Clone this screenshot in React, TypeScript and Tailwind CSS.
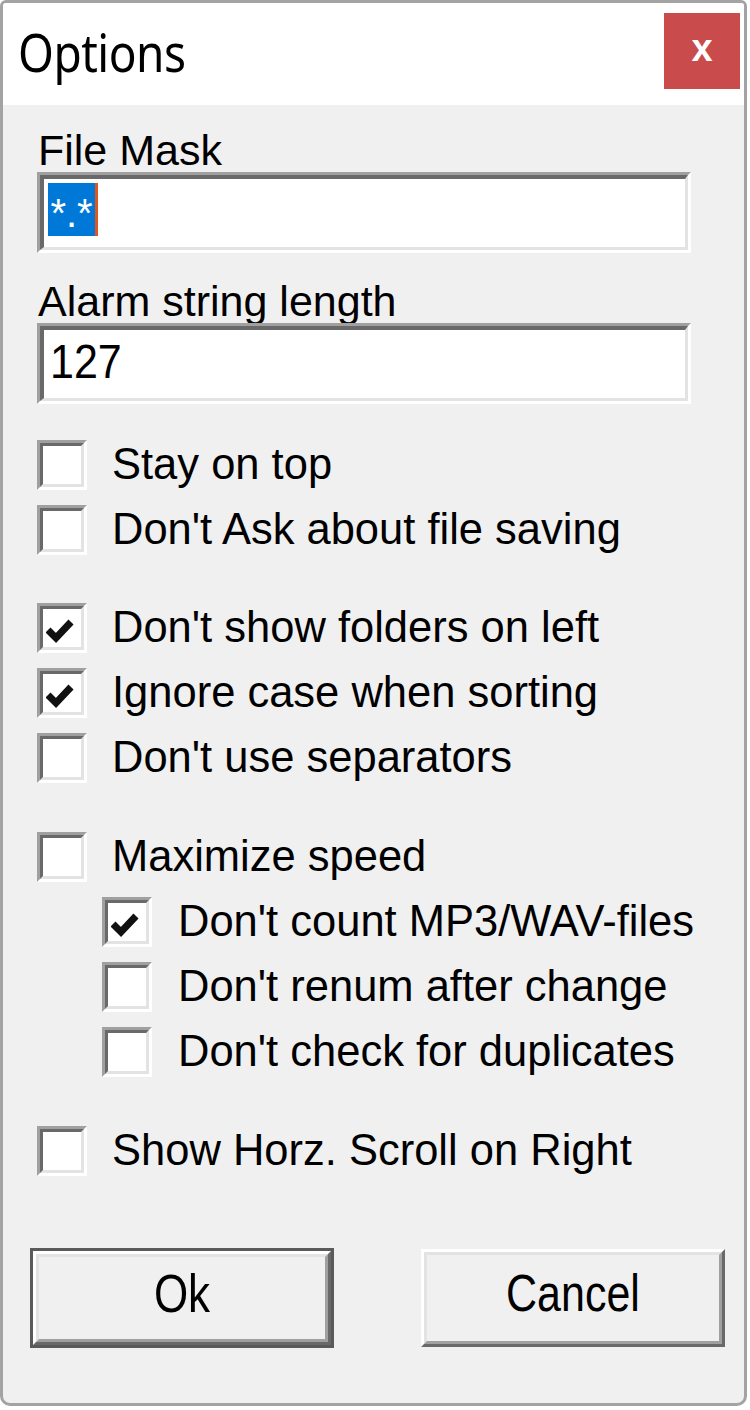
import React from "react";

const sans = "font-['Liberation_Sans',Arial,sans-serif]";

function Check() {
  return (
    <svg className="shrink-0" width="28" height="27" viewBox="0 0 28 27">
      <polyline points="2,12 10,20 25,4" fill="none" stroke="#111" strokeWidth="7" strokeLinejoin="miter" strokeLinecap="butt" />
    </svg>
  );
}

function Box({ checked }: { checked?: boolean }) {
  return (
    <div className="w-[50px] h-[50px] shrink-0 border-[3px] border-t-[#a0a0a0] border-l-[#a0a0a0] border-b-white border-r-white">
      <div className="h-full border-[3px] border-t-[#696969] border-l-[#696969] border-b-[#e3e3e3] border-r-[#e3e3e3] bg-white flex items-start pl-[3px] pt-[9px]">
        {checked && <Check />}
      </div>
    </div>
  );
}

function Row({ label, checked, indent }: { label: string; checked?: boolean; indent?: boolean }) {
  return (
    <div className={`h-[65px] flex items-center ${indent ? "pl-[99px] gap-[26px]" : "pl-[34px] gap-[25px]"}`}>
      <Box checked={checked} />
      <span className={`${sans} text-[43.5px] leading-none text-black whitespace-nowrap`}>{label}</span>
    </div>
  );
}

function Field({ children }: { children: React.ReactNode }) {
  return (
    <div className="w-[654px] h-[81px] border-[3px] border-t-[#a0a0a0] border-l-[#a0a0a0] border-b-white border-r-white">
      <div className="h-full border-t-[4px] border-l-[4px] border-b-[3px] border-r-[3px] border-t-[#696969] border-l-[#696969] border-b-[#e3e3e3] border-r-[#e3e3e3] bg-white flex items-center">
        {children}
      </div>
    </div>
  );
}

const groups: { label: string; checked?: boolean; indent?: boolean }[][] = [
  [{ label: "Stay on top" }, { label: "Don't Ask about file saving" }],
  [
    { label: "Don't show folders on left", checked: true },
    { label: "Ignore case when sorting", checked: true },
    { label: "Don't use separators" },
  ],
  [
    { label: "Maximize speed" },
    { label: "Don't count MP3/WAV-files", checked: true, indent: true },
    { label: "Don't renum after change", indent: true },
    { label: "Don't check for duplicates", indent: true },
  ],
  [{ label: "Show Horz. Scroll on Right" }],
];

export default function App() {
  return (
    <div className="w-[750px] h-[1410px] bg-white">
      <div className="w-[747px] h-[1406px] border-[3px] border-[#a3a3a3] rounded-t-[6px] rounded-b-[10px] overflow-hidden flex flex-col bg-[#f0f0f0]">
        {/* title bar */}
        <div className="h-[102px] shrink-0 bg-white flex justify-between">
          <span className="ml-[15px] mt-[25px] h-[46px] font-['Noto_Sans',sans-serif] text-[46px] leading-none text-black tracking-[-0.5px] scale-y-[1.15]">
            Options
          </span>
          <div className="mt-[10px] mr-[4px] w-[76px] h-[76px] bg-[#c94b4b] flex items-center justify-center">
            <span className={`${sans} text-white font-bold text-[38px] leading-none pb-[6px]`}>x</span>
          </div>
        </div>

        {/* body */}
        <div className="flex-1 flex flex-col pt-[24px]">
          <div className="pl-[34px] flex flex-col">
            <div className={`${sans} pl-[1px] h-[43px] text-[43px] leading-[43px] text-black`}>File Mask</div>
            <Field>
              <div className="self-start mt-[4px] ml-[4px] w-[50px] h-[53px] bg-[#0078d7] border-r-[3px] border-r-[#e0561c] flex items-center justify-center">
                <span className={`${sans} text-white text-[40px] leading-none pt-[6px]`}>*.*</span>
              </div>
            </Field>
            <div className={`${sans} pl-[1px] mt-[27px] h-[43px] text-[43px] leading-[43px] text-black`}>
              Alarm string length
            </div>
            <Field>
              <span className={`${sans} pl-[6px] pb-[4px] text-[43px] leading-none text-black scale-y-[1.12]`}>127</span>
            </Field>
          </div>

          <div className="mt-[28px] flex flex-col">
            {groups.map((g, i) => (
              <div key={i} className={i === 0 ? "" : i === 1 ? "mt-[33px]" : "mt-[34px]"}>
                {g.map((r) => (
                  <Row key={r.label} {...r} />
                ))}
              </div>
            ))}
          </div>

          {/* buttons */}
          <div className="mt-[65px] pl-[27px] flex gap-[87px]">
            <div className="w-[304px] h-[100px] border-[3px] border-[#5a5a5a]">
              <div className="h-full border-[3px] border-t-white border-l-white border-b-[#696969] border-r-[#696969]">
                <div className="h-full border-[3px] border-t-[#e3e3e3] border-l-[#e3e3e3] border-b-[#a0a0a0] border-r-[#a0a0a0] flex items-center justify-center">
                  <span className={`${sans} text-[44px] leading-none text-black pb-[6px] scale-y-[1.2]`}>Ok</span>
                </div>
              </div>
            </div>
            <div className="w-[304px] h-[98px] mt-[1px] border-[3px] border-t-white border-l-white border-b-[#696969] border-r-[#696969]">
              <div className="h-full border-[3px] border-t-[#e3e3e3] border-l-[#e3e3e3] border-b-[#a0a0a0] border-r-[#a0a0a0] flex items-center justify-center">
                <span className={`${sans} text-[43px] leading-none text-black pb-[8px] scale-y-[1.2]`}>Cancel</span>
              </div>
            </div>
          </div>
        </div>
      </div>
    </div>
  );
}
